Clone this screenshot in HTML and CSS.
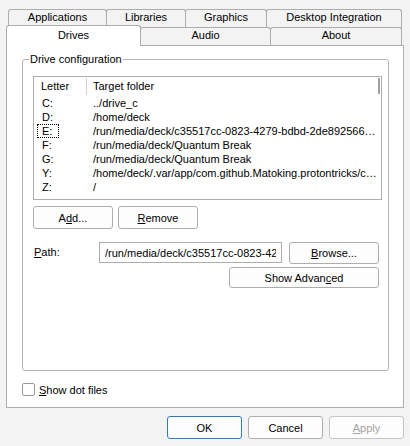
FILE: index.html
```html
<!DOCTYPE html>
<html lang="en">
<head>
<meta charset="utf-8">
<title>Wine configuration</title>
<link rel="stylesheet" href="styles.css">
</head>
<body>
<div class="dialog">
  <div class="tab-row row-back">
    <div class="tab w-apps">Applications</div>
    <div class="tab w-libs">Libraries</div>
    <div class="tab w-graphics">Graphics</div>
    <div class="tab w-desktop">Desktop Integration</div>
  </div>
  <div class="tab-row row-front">
    <div class="tab tab-selected w-drives">Drives</div>
    <div class="tab w-audio">Audio</div>
    <div class="tab w-about">About</div>
  </div>
  <div class="panel">
    <fieldset class="group">
      <legend>Drive configuration</legend>
      <div class="listview">
        <div class="lv-header">
          <div class="hd-letter">Letter</div>
          <div class="hd-sep"></div>
          <div class="hd-target">Target folder</div>
        </div>
        <div class="lv-row"><div class="col-letter"><span class="cell">C:</span></div><div class="col-target">../drive_c</div></div>
        <div class="lv-row"><div class="col-letter"><span class="cell">D:</span></div><div class="col-target">/home/deck</div></div>
        <div class="lv-row"><div class="col-letter"><span class="cell cell-focus">E:</span></div><div class="col-target">/run/media/deck/c35517cc-0823-4279-bdbd-2de8925660a1b3</div></div>
        <div class="lv-row"><div class="col-letter"><span class="cell">F:</span></div><div class="col-target">/run/media/deck/Quantum Break</div></div>
        <div class="lv-row"><div class="col-letter"><span class="cell">G:</span></div><div class="col-target">/run/media/deck/Quantum Break</div></div>
        <div class="lv-row"><div class="col-letter"><span class="cell">Y:</span></div><div class="col-target">/home/deck/.var/app/com.github.Matoking.protontricks/cache</div></div>
        <div class="lv-row"><div class="col-letter"><span class="cell">Z:</span></div><div class="col-target">/</div></div>
        <div class="lv-thumb"></div>
      </div>
      <div class="btn-row">
        <button class="btn w-add">A<u>d</u>d...</button>
        <button class="btn w-add"><u>R</u>emove</button>
      </div>
      <div class="path-row">
        <label class="path-label" for="path"><u>P</u>ath:</label>
        <input class="path-input" id="path" type="text" value="/run/media/deck/c35517cc-0823-4279-bdbd-2de8925660a1b3" readonly>
        <button class="btn w-browse"><u>B</u>rowse...</button>
      </div>
      <div class="adv-row">
        <button class="btn w-adv">Show Advan<u>c</u>ed</button>
      </div>
    </fieldset>
    <label class="check-row"><input class="check" type="checkbox"><span><u>S</u>how dot files</span></label>
  </div>
  <div class="footer">
    <button class="btn btn-default w-foot">OK</button>
    <button class="btn w-foot">Cancel</button>
    <button class="btn btn-disabled w-foot"><u>A</u>pply</button>
  </div>
</div>
</body>
</html>
```
FILE: styles.css
```css
body {
  margin: 0;
  background: #f3f3f3;
  font-family: "Liberation Sans", Arial, sans-serif;
  font-size: 11px;
  color: #000;
}

.dialog {
  width: 398px;
  padding: 9px 6px 0 6px;
}

/* tabs */
.tab-row {
  display: flex;
}
.row-back {
  margin-left: 2px;
  height: 20px;
}
.row-front {
  margin-top: -4px;
  height: 20px;
  align-items: flex-start;
  position: relative;
  z-index: 1;
}
.tab {
  box-sizing: border-box;
  flex: none;
  border: 1px solid #adadad;
  border-bottom: none;
  border-radius: 3px 3px 0 0;
  background: #f3f3f3;
  text-align: center;
  white-space: nowrap;
}
.tab + .tab {
  margin-left: -1px;
}
.row-back .tab {
  height: 20px;
  line-height: 15px;
}
.row-front .tab {
  margin-top: 2px;
  height: 18px;
  line-height: 14px;
}
.row-front .tab-selected {
  margin-top: 0;
  height: 21px;
  line-height: 18px;
  background: #fff;
  position: relative;
  z-index: 2;
}
.w-apps { width: 99px; }
.w-libs { width: 80px; }
.w-graphics { width: 82px; }
.w-desktop { width: 136px; }
.w-drives { width: 135px; }
.w-audio { width: 131px; }
.w-about { width: 132px; }

/* panel */
.panel {
  box-sizing: border-box;
  height: 363px;
  border: 1px solid #adadad;
  background: #fff;
  padding: 7px 14px 0 15px;
}

.group {
  box-sizing: border-box;
  height: 318px;
  min-width: 0;
  margin: 0;
  padding: 0 6px 0 10px;
  border: 1px solid #b4b4b4;
  border-radius: 3px;
}
.group legend {
  margin-left: -4px;
  padding: 0 1px;
  line-height: 13px;
}

/* list view */
.listview {
  position: relative;
  box-sizing: border-box;
  height: 124px;
  margin-top: 10px;
  border: 1px solid #adadad;
  background: #fff;
  overflow: hidden;
}
.lv-header {
  display: flex;
  height: 19px;
  line-height: 19px;
}
.hd-letter {
  box-sizing: border-box;
  flex: none;
  width: 52px;
  padding-left: 7px;
}
.hd-sep {
  flex: none;
  width: 1px;
  height: 17px;
  margin-top: 1px;
  background: #d0d0d0;
}
.hd-target {
  flex: 1;
  padding-left: 6px;
}
.lv-row {
  display: flex;
  height: 14px;
  line-height: 14px;
}
.col-letter {
  box-sizing: border-box;
  flex: none;
  width: 53px;
  padding-left: 3px;
}
.cell {
  display: inline-block;
  box-sizing: border-box;
  width: 22px;
  height: 14px;
  line-height: 12px;
  padding-left: 4px;
  border: 1px dotted transparent;
  vertical-align: top;
}
.cell-focus {
  border-color: #000;
}
.col-target {
  flex: 1;
  min-width: 0;
  padding: 0 3px 0 6px;
  white-space: nowrap;
  overflow: hidden;
  text-overflow: ellipsis;
}
.lv-thumb {
  position: absolute;
  top: 1px;
  right: 1px;
  width: 2px;
  height: 16px;
  background: #a0a0a0;
}

/* buttons */
.btn {
  box-sizing: border-box;
  height: 23px;
  padding: 0;
  border: 1px solid #adadad;
  border-radius: 3px;
  background: #fdfdfd;
  color: #000;
  font: inherit;
}
.btn u, .path-label u, .check-row u {
  text-underline-offset: 1px;
}
.btn-row {
  display: flex;
  gap: 5px;
  margin-top: 6px;
}
.w-add { width: 80px; }

.path-row {
  display: flex;
  align-items: flex-start;
  margin-top: 13px;
}
.path-label {
  box-sizing: border-box;
  flex: none;
  width: 66px;
  padding-left: 1px;
  line-height: 21px;
}
.path-input {
  box-sizing: border-box;
  flex: none;
  width: 183px;
  height: 21px;
  margin: 0;
  padding: 0 5px;
  border: 1px solid #adadad;
  border-radius: 0;
  background: #fff;
  color: #000;
  font: inherit;
  outline: none;
}
.w-browse {
  width: 90px;
  height: 22px;
  margin-left: 7px;
}
.adv-row {
  display: flex;
  justify-content: flex-end;
  padding-right: 3px;
  margin-top: 3px;
}
.w-adv {
  width: 150px;
  height: 21px;
}

/* checkbox */
.check-row {
  display: flex;
  align-items: center;
  gap: 4px;
  height: 13px;
  margin-top: 12px;
}
.check {
  appearance: none;
  -webkit-appearance: none;
  box-sizing: border-box;
  width: 13px;
  height: 13px;
  margin: 0;
  border: 1px solid #9a9a9a;
  border-radius: 2px;
  background: #fff;
}

/* footer */
.footer {
  display: flex;
  justify-content: flex-end;
  gap: 6px;
  margin-top: 8px;
}
.w-foot { width: 75px; }
.btn-default {
  border-color: #2a7bd6;
}
.btn-disabled {
  color: #a3a3a3;
  border-color: #c4c4c4;
}
```
